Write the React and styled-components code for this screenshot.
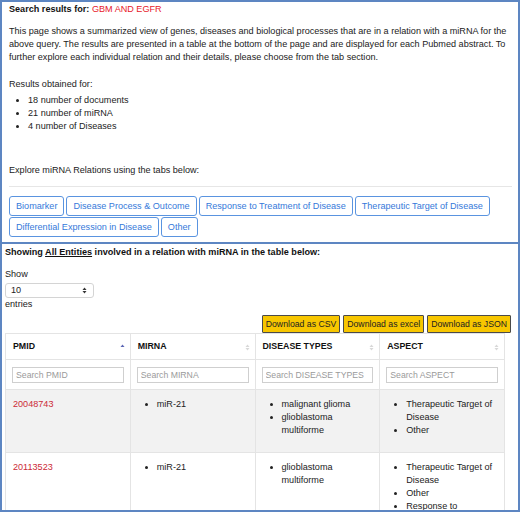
import React from 'react';
import styled, { createGlobalStyle } from 'styled-components';

const GlobalStyle = createGlobalStyle`
  html, body {
    margin: 0;
    padding: 0;
    background: #ffffff;
  }
  body {
    font-family: "Liberation Sans", Arial, Helvetica, sans-serif;
    font-size: 9.1px;
    line-height: 13px;
    color: #222222;
  }
`;

const Frame = styled.div`
  width: 520px;
  height: 512px;
  box-sizing: border-box;
  border: 2px solid #5d86c2;
  overflow: hidden;
`;

const TopPanel = styled.section`
  padding: 1px 6px 5px 7px;
  border-bottom: 2px solid #5d86c2;
`;

const Heading = styled.div`
  font-weight: bold;
  color: #111111;
`;

const Query = styled.span`
  color: #e8202a;
  font-weight: normal;
`;

const Paragraph = styled.p`
  margin: ${p => p.$top || 0}px 0 0 0;
`;

const BulletList = styled.ul`
  margin: 3px 0 0 0;
  padding-left: 19px;
`;

const Rule = styled.hr`
  border: none;
  border-top: 1px solid #e6e6e6;
  margin: 9px 0 9px 0;
`;

const Tabs = styled.div`
  display: flex;
  flex-wrap: wrap;
  gap: 1px 2px;
`;

const TabButton = styled.button`
  font-family: inherit;
  font-size: 9.1px;
  height: 20px;
  padding: 0 6px;
  background: #ffffff;
  color: #3579da;
  border: 1px solid #5a94e0;
  border-radius: 3px;
  cursor: pointer;
`;

const BottomPanel = styled.section`
  padding: 2px 0 0 3px;
`;

const Label = styled.div`
  margin-top: ${p => p.$top || 0}px;
`;

const Underlined = styled.span`
  text-decoration: underline;
`;

const Select = styled.div`
  width: 89px;
  height: 15px;
  box-sizing: border-box;
  border: 1px solid #d4d4d4;
  border-radius: 3px;
  display: flex;
  align-items: center;
  justify-content: space-between;
  padding: 0 6px 0 5px;
  margin-top: 2px;
`;

const DownloadBar = styled.div`
  display: flex;
  justify-content: flex-end;
  gap: 3px;
  width: 506px;
  margin-top: 4px;
`;

const DownloadButton = styled.button`
  font-family: inherit;
  font-size: 8.7px;
  height: 18px;
  padding: 0 3px;
  background: #f7c600;
  color: #222222;
  border: 1px solid #4a4a4a;
  border-radius: 1px;
`;

const Table = styled.table`
  width: 500px;
  border-collapse: collapse;
  table-layout: fixed;
`;

const HeadCell = styled.th`
  text-align: left;
  font-weight: bold;
  font-size: 8.8px;
  height: 25px;
  padding: 0 7px;
  border: 1px solid #e4e4e4;
  position: relative;
  color: #111111;
`;

const SortMark = styled.svg`
  position: absolute;
  right: 5px;
  top: 10px;
`;

const FilterCell = styled.td`
  height: 29px;
  padding: 0 6px;
  border: 1px solid #e4e4e4;
`;

const FilterInput = styled.input`
  width: 100%;
  height: 16px;
  box-sizing: border-box;
  border: 1px solid #cfcfcf;
  font-family: inherit;
  font-size: 8.7px;
  padding: 0 3px;
  &::placeholder { color: #9a9a9a; }
`;

const Row = styled.tr`
  background: ${p => (p.$shaded ? '#f2f2f2' : '#ffffff')};
`;

const Cell = styled.td`
  vertical-align: top;
  padding: 8px 7px 15px 7px;
  border: 1px solid #e4e4e4;
  height: 39px;
`;

const PmidLink = styled.a`
  color: #cc2a36;
  text-decoration: none;
`;

const CellList = styled.ul`
  margin: 0;
  padding-left: 19px;
`;

const Carets = ({ color }) => (
  <svg width="5" height="7" viewBox="0 0 5 7">
    <path d="M0.5 3 L2.5 0.5 L4.5 3 Z" fill={color} />
    <path d="M0.5 4 L2.5 6.5 L4.5 4 Z" fill={color} />
  </svg>
);

const SortCarets = ({ active }) => (
  <SortMark width="5" height="7" viewBox="0 0 5 7">
    <path d="M0.5 3 L2.5 0.5 L4.5 3 Z" fill={active ? '#5a64b4' : '#d8d8d8'} />
    {!active && <path d="M0.5 4 L2.5 6.5 L4.5 4 Z" fill="#d8d8d8" />}
  </SortMark>
);

const tabs = [
  'Biomarker',
  'Disease Process & Outcome',
  'Response to Treatment of Disease',
  'Therapeutic Target of Disease',
  'Differential Expression in Disease',
  'Other',
];

const columns = [
  { name: 'PMID', active: true },
  { name: 'MIRNA' },
  { name: 'DISEASE TYPES' },
  { name: 'ASPECT' },
];

const rows = [
  {
    pmid: '20048743',
    mirna: ['miR-21'],
    diseases: ['malignant glioma', 'glioblastoma multiforme'],
    aspects: ['Therapeutic Target of Disease', 'Other'],
  },
  {
    pmid: '20113523',
    mirna: ['miR-21'],
    diseases: ['glioblastoma multiforme'],
    aspects: ['Therapeutic Target of Disease', 'Other', 'Response to Treatment of Disease'],
  },
];

const App = () => {
  return (
    <>
      <GlobalStyle />
      <Frame>
        <TopPanel>
          <Heading>
            Search results for: <Query>GBM AND EGFR</Query>
          </Heading>
          <Paragraph $top={9}>
            This page shows a summarized view of genes, diseases and biological processes that are in a
            relation with a miRNA for the above query. The results are presented in a table at the bottom
            of the page and are displayed for each Pubmed abstract. To further explore each individual
            relation and their details, please choose from the tab section.
          </Paragraph>
          <Paragraph $top={14}>Results obtained for:</Paragraph>
          <BulletList>
            <li>18 number of documents</li>
            <li>21 number of miRNA</li>
            <li>4 number of Diseases</li>
          </BulletList>
          <Paragraph $top={31}>Explore miRNA Relations using the tabs below:</Paragraph>
          <Rule />
          <Tabs>
            {tabs.map(t => (
              <TabButton key={t}>{t}</TabButton>
            ))}
          </Tabs>
        </TopPanel>
        <BottomPanel>
          <Heading>
            Showing <Underlined>All Entities</Underlined> involved in a relation with miRNA in the table below:
          </Heading>
          <Label $top={9}>Show</Label>
          <Select>
            10
            <Carets color="#333333" />
          </Select>
          <Label>entries</Label>
          <DownloadBar>
            <DownloadButton>Download as CSV</DownloadButton>
            <DownloadButton>Download as excel</DownloadButton>
            <DownloadButton>Download as JSON</DownloadButton>
          </DownloadBar>
          <Table>
            <thead>
              <tr>
                {columns.map(c => (
                  <HeadCell key={c.name}>
                    {c.name}
                    <SortCarets active={c.active} />
                  </HeadCell>
                ))}
              </tr>
              <tr>
                {columns.map(c => (
                  <FilterCell key={c.name}>
                    <FilterInput placeholder={`Search ${c.name}`} />
                  </FilterCell>
                ))}
              </tr>
            </thead>
            <tbody>
              {rows.map((r, i) => (
                <Row key={r.pmid} $shaded={i % 2 === 0}>
                  <Cell>
                    <PmidLink href="#">{r.pmid}</PmidLink>
                  </Cell>
                  <Cell>
                    <CellList>
                      {r.mirna.map(m => <li key={m}>{m}</li>)}
                    </CellList>
                  </Cell>
                  <Cell>
                    <CellList>
                      {r.diseases.map(d => <li key={d}>{d}</li>)}
                    </CellList>
                  </Cell>
                  <Cell>
                    <CellList>
                      {r.aspects.map(a => <li key={a}>{a}</li>)}
                    </CellList>
                  </Cell>
                </Row>
              ))}
            </tbody>
          </Table>
        </BottomPanel>
      </Frame>
    </>
  );
};

export default App;
